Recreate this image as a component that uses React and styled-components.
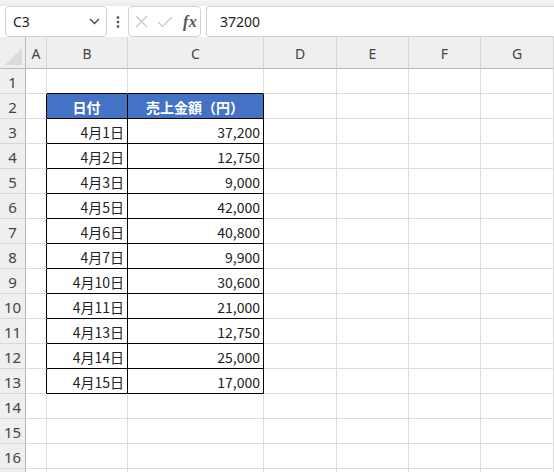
import React from "react";
import styled, { createGlobalStyle } from "styled-components";

const Global = createGlobalStyle`
  html, body { margin: 0; padding: 0; background: #fff; overflow: hidden; }
  * { box-sizing: border-box; }
`;

const Page = styled.div`
  width: 554px;
  height: 472px;
  overflow: hidden;
  display: flex;
  flex-direction: column;
  font-family: "Noto Sans", "Noto Sans CJK JP", sans-serif;
`;

const TopStrip = styled.div`
  flex-shrink: 0;
  height: 6px;
  background: linear-gradient(#f4f4f4, #ececec);
`;

const FormulaBar = styled.div`
  flex-shrink: 0;
  height: 31px;
  display: flex;
  align-items: stretch;
  background: #fff;
  padding-left: 5px;
`;

const NameBox = styled.div`
  width: 102px;
  border: 1px solid #d2d2d2;
  border-radius: 4px;
  display: flex;
  align-items: center;
  justify-content: space-between;
  padding: 0 6px 0 7px;
  font-size: 14px;
  color: #222;
`;

const Dots = styled.div`
  width: 21px;
  display: flex;
  align-items: center;
  justify-content: center;
`;

const IconBox = styled.div`
  width: 73px;
  border: 1px solid #d2d2d2;
  border-radius: 4px;
  display: flex;
  align-items: center;
  padding: 0 0 0 6px;
  gap: 9px;
`;

const Fx = styled.span`
  font-family: "Liberation Serif", "DejaVu Serif", serif;
  font-style: italic;
  font-weight: bold;
  font-size: 16px;
  color: #555;
  margin-left: 1px;
  letter-spacing: 0.5px;
`;

const Input = styled.div`
  flex: 1;
  margin-left: 5px;
  border: 1px solid #d2d2d2;
  border-right: none;
  border-radius: 4px 0 0 4px;
  display: flex;
  align-items: center;
  padding-left: 13px;
  font-size: 14px;
  color: #222;
`;

const Sheet = styled.div`
  flex-shrink: 0;
  display: grid;
  grid-template-columns: 26px 21px 81px 136px 73px 72px 72px 73px 1fr;
  grid-template-rows: 32px;
  grid-auto-rows: 25px;
`;

const Corner = styled.div`
  background: #efefef;
  border-right: 1px solid #b9b9b9;
  border-bottom: 1px solid #b9b9b9;
  position: relative;
  overflow: hidden;
`;

const CornerTri = styled.div`
  position: absolute;
  right: 3px;
  bottom: 3px;
  width: 0;
  height: 0;
  border-left: 17px solid transparent;
  border-bottom: 17px solid #dadada;
`;

const ColHead = styled.div`
  background: #efefef;
  border-right: 1px solid #d6d6d6;
  border-bottom: 1px solid #b9b9b9;
  display: flex;
  align-items: center;
  justify-content: center;
  font-size: 14px;
  color: #444;
  padding-top: 1px;
`;

const RowHead = styled.div`
  background: #efefef;
  border-right: 1px solid #b9b9b9;
  border-bottom: 1px solid #d6d6d6;
  display: flex;
  align-items: center;
  justify-content: center;
  font-size: 15px;
  color: #444;
  padding-top: 1px;
`;

const Cell = styled.div`
  border-right: 1px solid ${(p) => (p.$br ? "#000" : "#dcdcdc")};
  border-bottom: 1px solid ${(p) => (p.$bb ? "#000" : "#dcdcdc")};
  background: ${(p) => (p.$head ? "#4472c4" : "#fff")};
  color: ${(p) => (p.$head ? "#fff" : "#222")};
  font-weight: ${(p) => (p.$head ? 700 : 400)};
  font-family: "Noto Sans CJK JP", "Noto Sans", sans-serif;
  font-size: 14px;
  display: flex;
  align-items: center;
  justify-content: ${(p) => (p.$head ? "center" : "flex-end")};
  padding: 1px 3px 0 2px;
  white-space: nowrap;
`;

const cols = ["A", "B", "C", "D", "E", "F", "G", ""];

const data = [
  ["4月1日", "37,200"],
  ["4月2日", "12,750"],
  ["4月3日", "9,000"],
  ["4月5日", "42,000"],
  ["4月6日", "40,800"],
  ["4月7日", "9,900"],
  ["4月10日", "30,600"],
  ["4月11日", "21,000"],
  ["4月13日", "12,750"],
  ["4月14日", "25,000"],
  ["4月15日", "17,000"],
];

function Row({ n, label }) {
  const inTable = n >= 2 && n <= 13;
  const cells = [];
  for (let c = 0; c < 8; c++) {
    let text = "";
    let br = false;
    let bb = false;
    let head = false;
    if (c === 0 && inTable) br = true;
    if ((c === 1 || c === 2) && (n === 1 || inTable)) bb = true;
    if ((c === 1 || c === 2) && inTable) br = true;
    if (n === 2 && c === 1) { text = "日付"; head = true; }
    if (n === 2 && c === 2) { text = "売上金額（円）"; head = true; }
    if (n >= 3 && n <= 13 && c >= 1 && c <= 2) text = data[n - 3][c - 1];
    cells.push(
      <Cell key={c} $br={br} $bb={bb} $head={head}>
        {text}
      </Cell>
    );
  }
  return (
    <>
      <RowHead>{label ? n : ""}</RowHead>
      {cells}
    </>
  );
}

export default function App() {
  const rows = Array.from({ length: 17 }, (_, i) => i + 1);
  return (
    <Page>
      <Global />
      <TopStrip />
      <FormulaBar>
        <NameBox>
          <span>C3</span>
          <svg width="11" height="7" viewBox="0 0 11 7">
            <path d="M1 1 L5.5 5.5 L10 1" fill="none" stroke="#444" strokeWidth="1.3" />
          </svg>
        </NameBox>
        <Dots>
          <svg width="4" height="12" viewBox="0 0 4 12">
            <circle cx="2" cy="1.5" r="1.3" fill="#444" />
            <circle cx="2" cy="6" r="1.3" fill="#444" />
            <circle cx="2" cy="10.5" r="1.3" fill="#444" />
          </svg>
        </Dots>
        <IconBox>
          <svg width="13" height="13" viewBox="0 0 13 13">
            <path d="M1 1 L12 12 M12 1 L1 12" stroke="#c4c4c4" strokeWidth="1.1" fill="none" />
          </svg>
          <svg width="16" height="12" viewBox="0 0 16 12">
            <path d="M1 6 L5.5 10.5 L15 1" stroke="#c4c4c4" strokeWidth="1.1" fill="none" />
          </svg>
          <Fx>fx</Fx>
        </IconBox>
        <Input>37200</Input>
      </FormulaBar>
      <Sheet>
        <Corner>
          <CornerTri />
        </Corner>
        {cols.map((c, i) => (
          <ColHead key={i}>{c}</ColHead>
        ))}
        {rows.map((n) => (
          <Row key={n} n={n} label={n <= 16} />
        ))}
      </Sheet>
    </Page>
  );
}
